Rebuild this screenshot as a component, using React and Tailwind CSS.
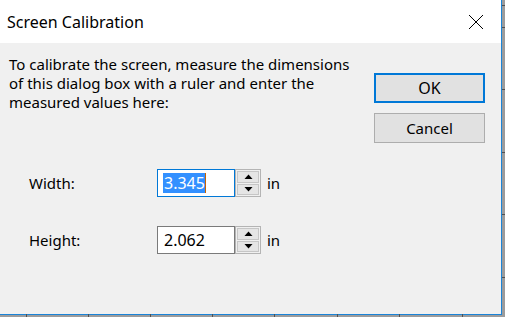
import React from "react";

const FONT = { fontFamily: '"Noto Sans", "Open Sans", sans-serif' };

const BOTTOM_TICKS = [26, 88, 150, 212, 274, 337, 399, 462];
const RIGHT_TICKS = [5, 27, 89, 152, 214, 277];

const Spinner = () => (
  <div className="flex h-[28px] w-[26px] flex-col gap-px border border-[#b4b4b4] bg-[#f0f0f0] p-px">
    <div className="flex flex-1 items-center justify-center border border-[#c6c6c6] bg-[#e5e5e5]">
      <svg width="9" height="5" viewBox="0 0 9 5">
        <path d="M0.5 5 L4.5 0.5 L8.5 5 Z" fill="#000" />
      </svg>
    </div>
    <div className="flex flex-1 items-center justify-center border border-[#c6c6c6] bg-[#e5e5e5]">
      <svg width="9" height="5" viewBox="0 0 9 5">
        <path d="M0.5 0 L4.5 4.5 L8.5 0 Z" fill="#000" />
      </svg>
    </div>
  </div>
);

const Field = ({ label, value, focused }) => (
  <div className="flex h-[28px] items-center">
    <span className="w-[128px] text-[15px] text-black">{label}</span>
    <div
      className={`flex h-[28px] w-[78px] items-center bg-white pl-[5px] text-[16px] ${
        focused ? "border border-[#0078d7]" : "border border-[#7a7a7a]"
      }`}
    >
      {focused ? (
        <>
          <span className="bg-[#3390ff] pl-px leading-[20px] text-white">{value}</span>
          <span className="h-[20px] w-px bg-[#c86400]" />
        </>
      ) : (
        <span className="pl-px leading-[20px] text-black">{value}</span>
      )}
    </div>
    <Spinner />
    <span className="ml-[6px] text-[15px] text-black">in</span>
  </div>
);

export default function App() {
  return (
    <div className="relative h-[317px] w-[505px] overflow-hidden bg-[#9c9c9c]" style={FONT}>
      <div className="flex h-[315px] w-[502px] flex-col border-b border-r border-[#1a84d8]">
        <div className="flex h-[43px] items-center justify-between bg-white pl-[7px] pr-[17px]">
          <span className="text-[16px] text-black">Screen Calibration</span>
          <svg width="16" height="16" viewBox="0 0 16 16">
            <path d="M1 1 L15 15 M15 1 L1 15" stroke="#000" strokeWidth="1" />
          </svg>
        </div>
        <div className="flex flex-1 bg-[#f0f0f0]">
          <div className="flex-1 pl-[9px] pt-[12px]">
            <p className="text-[15px] leading-[19px] text-black">
              To calibrate the screen, measure the dimensions
              <br />
              of this dialog box with a ruler and enter the
              <br />
              measured values here:
            </p>
            <div className="ml-[20px] mt-[57px] flex flex-col gap-[29px]">
              <Field label="Width:" value="3.345" focused />
              <Field label="Height:" value="2.062" />
            </div>
          </div>
          <div className="flex flex-col gap-[10px] pr-[16px] pt-[30px]">
            <button className="flex h-[30px] w-[111px] items-center justify-center border-2 border-[#0078d7] bg-[#e1e1e1] text-[16px] text-black">
              OK
            </button>
            <button className="flex h-[30px] w-[111px] items-center justify-center border border-[#adadad] bg-[#e1e1e1] text-[15px] text-black">
              Cancel
            </button>
          </div>
        </div>
      </div>
      {BOTTOM_TICKS.map((x) => (
        <div key={x} className="absolute bottom-0 h-[3px] w-px bg-[#505050]" style={{ left: x }} />
      ))}
      {RIGHT_TICKS.map((y) => (
        <div key={y} className="absolute right-0 h-px w-[3px] bg-[#505050]" style={{ top: y }} />
      ))}
    </div>
  );
}
